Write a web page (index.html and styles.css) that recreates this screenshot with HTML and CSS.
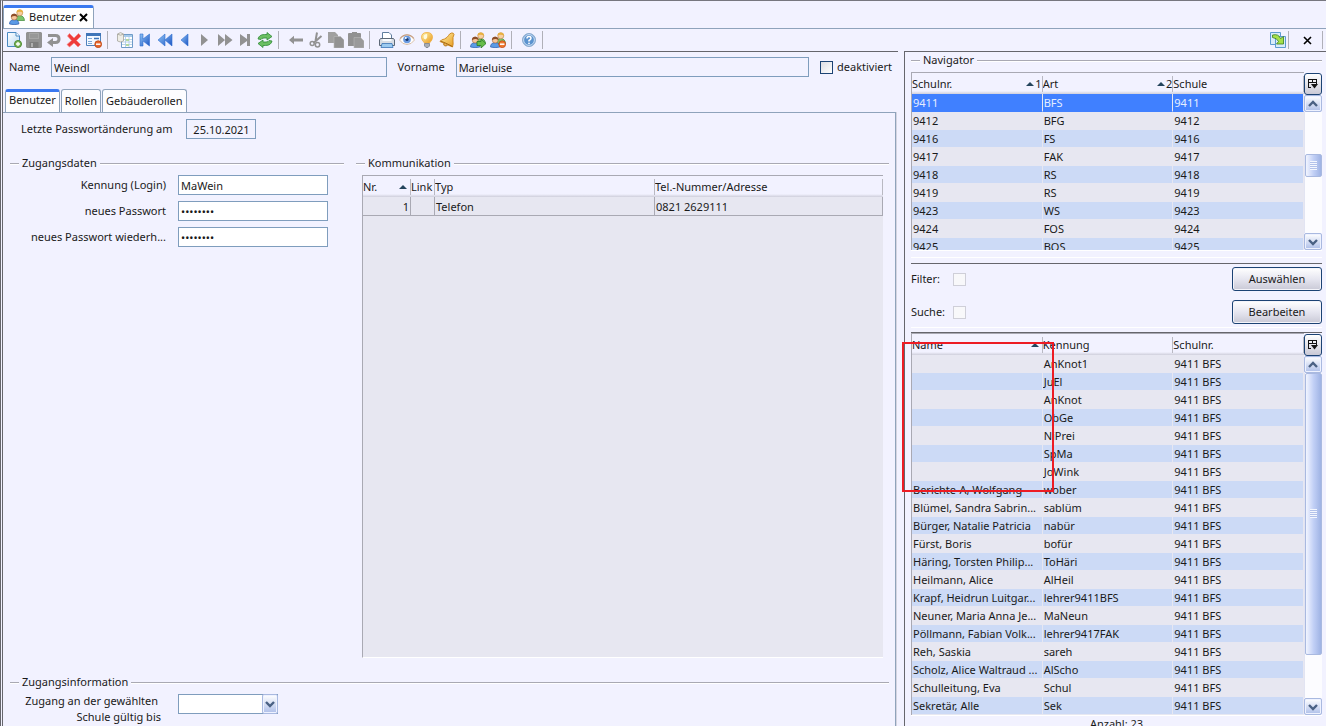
FILE: index.html
```html
<!DOCTYPE html>

<html lang="de">
<head>
<meta charset="UTF-8">
<meta name="viewport" content="width=device-width, initial-scale=1.0">
<title>Benutzer</title>

<link rel="stylesheet" href="styles.css">

</head>

<body>

<!-- ICONS -->

<svg class="defs" aria-hidden="true">
    <defs>
        <linearGradient id="blue" x1="0" y1="0" x2="1" y2="1">
            <stop offset="0" stop-color="#8fc4f5"/>
            <stop offset="1" stop-color="#1d55c4"/>
        </linearGradient>
        <linearGradient id="gold" x1="0" y1="0" x2="1" y2="1">
            <stop offset="0" stop-color="#fff3a8"/>
            <stop offset="1" stop-color="#e89a20"/>
        </linearGradient>
        <linearGradient id="page" x1="0" y1="0" x2="1" y2="1">
            <stop offset="0" stop-color="#ffffff"/>
            <stop offset="1" stop-color="#b9d9f3"/>
        </linearGradient>
    </defs>
    <symbol id="users" viewBox="0 0 16 16">
        <path d="M6.500 9.500Q7 6.500 10.500 6.500Q15 6.500 15.500 11.500H8z" fill="#7cc46a" stroke="#3f8a3a" stroke-width=".7"/>
        <circle cx="10.800" cy="3.800" r="3" fill="#f8cfa0" stroke="#b98546" stroke-width=".6"/>
        <path d="M7.600 3.800Q7.400 .5 10.800 .5Q14.200 .5 14 4Q12.500 2.600 10.500 2.800Q8.500 2.900 7.600 3.800z" fill="#e8b040"/>
        <path d="M.5 15Q.5 10.700 5.200 10.700Q9.900 10.700 9.900 15Q5 16.400 .5 15z" fill="#5b9be6" stroke="#2a5cac" stroke-width=".7"/>
        <circle cx="5.200" cy="8" r="3" fill="#f6c59a" stroke="#a96a3b" stroke-width=".6"/>
        <path d="M2 8.200Q1.700 4.700 5.200 4.700Q8.700 4.700 8.400 8.200Q7 6.700 5 6.900Q3 7 2 8.200z" fill="#8d4f2a"/>
    </symbol>
    <symbol id="menu" viewBox="0 0 12 12">
        <path d="M1.500 1.500H9.500M1.500 4.500H9.500M1.500 1V9.500M5.500 1V5M9.500 1V6M1 9.500H4" fill="none" stroke="#111"/>
        <path d="M4 6H11L7.500 10.500z" fill="#111"/>
    </symbol>
    <symbol id="up" viewBox="0 0 10 8">
        <path d="M1 6L5 2L9 6" fill="none" stroke="#4a6184" stroke-width="2.400"/>
    </symbol>
    <symbol id="down" viewBox="0 0 10 8">
        <path d="M1 2L5 6L9 2" fill="none" stroke="#4a6184" stroke-width="2.400"/>
    </symbol>
    <symbol id="sort" viewBox="0 0 8 4">
        <path d="M4 0L8 4H0z" fill="#24445c"/>
    </symbol>
</svg>

<div class="window">

<!-- WINDOW TAB -->

<header class="windowTabs">
    <div class="windowTab">
        <svg class="icon"><use href="#users"/></svg>
        <span>Benutzer</span>
        <button class="close" aria-label="Tab schließen">
            <svg width="9" height="9" viewBox="0 0 9 9"><path d="M1 1L8 8M8 1L1 8" stroke="#000" stroke-width="2"/></svg>
        </button>
    </div>
</header>

<!-- TOOLBAR -->

<nav class="toolbar">
    <button aria-label="Neu">
        <svg class="icon" viewBox="0 0 16 16"><path d="M1.500 .5H10L13.500 4V14.500H1.500z" fill="url(#page)" stroke="#4a8ac2"/><path d="M10 .5V4H13.500" fill="#fff" stroke="#4a8ac2"/><circle cx="12" cy="12" r="3.500" fill="#7fb85c" stroke="#4c8832"/><path d="M12 10V14M10 12H14" stroke="#fff" stroke-width="1.300"/></svg>
    </button>
    <button aria-label="Speichern">
        <svg class="icon" viewBox="0 0 16 16"><path d="M1 0H15L16 1V15L15 16H1L0 15V1z" fill="#929292"/><path d="M3 1H13V7H3z" fill="#a6a6a6"/><path d="M4 3H12M4 5H12" stroke="#8a8a8a"/><path d="M3.500 10H12.500V16H3.500z" fill="#7e7e7e"/><path d="M5 11H7V15H5z" fill="#b0b0b0"/></svg>
    </button>
    <button aria-label="Rückgängig">
        <svg class="icon" viewBox="0 0 16 16"><path d="M2 3.500H9.500Q13 3.500 13 7Q13 10.500 9.500 10.500H6" fill="none" stroke="#929292" stroke-width="3"/><path d="M7 6V15L1 10.500z" fill="#929292"/></svg>
    </button>
    <button aria-label="Löschen">
        <svg class="icon" viewBox="0 0 16 16"><path d="M3.500 1.500L8 6L12.500 1.500L15 4L10.500 8.500L14.500 12.500L12 15L8 11L3.500 15L1 12.500L5.500 8.500L1.500 4z" fill="#ee3b3b" stroke="#f58a86" stroke-width=".7"/></svg>
    </button>
    <button aria-label="Eintrag entfernen">
        <svg class="icon" viewBox="0 0 16 16"><path d="M.5 1.500H14.500V13.500H.5z" fill="#f4f9ff" stroke="#4f82bd"/><path d="M0 1H15V4H0z" fill="#3f75b8"/><path d="M2 6.500H6M2 9.500H6M2 11.500H6" stroke="#7ba7d6"/><path d="M8 6.500H13" stroke="#3f75b8" stroke-width="1.500"/><circle cx="12.200" cy="12.200" r="3.400" fill="#e8662c" stroke="#b84512" stroke-width=".8"/><path d="M10 12.200H14.400" stroke="#fff" stroke-width="1.500"/></svg>
    </button>
    <span class="sep"></span>
    <button aria-label="Datenliste">
        <svg class="icon" viewBox="0 0 16 16"><path d="M4.500 2.500H15.500V15.500H4.500z" fill="#fff" stroke="#6f9bc8"/><path d="M5 3H15V5H5z" fill="#a8cbea"/><path d="M5 7.500H15M5 10H15M5 12.500H15M8.500 5V15M12 5V15" stroke="#a9c9e6" stroke-width=".8"/><path d="M9 7H12V9H9zM9 12H12V14H9z" fill="#b4d8a0"/><path d="M.5 2V9Q3.500 11 6.500 9V2Q3.500 -.8 .5 2z" fill="#eeede6" stroke="#a5a59c" stroke-width=".8"/><path d="M.5 2.200Q3.500 4.200 6.500 2.200" fill="none" stroke="#a5a59c" stroke-width=".8"/></svg>
    </button>
    <button aria-label="Erster">
        <svg class="icon" viewBox="0 0 16 16"><path d="M3 2H6V7L12.500 2V14L6 9V14H3z" fill="url(#blue)" stroke="#2f6fd0" stroke-width=".6"/></svg>
    </button>
    <button aria-label="Zurückblättern">
        <svg class="icon" viewBox="0 0 16 16"><path d="M8 2V14L1 8zM15 2V14L8 8z" fill="url(#blue)" stroke="#2f6fd0" stroke-width=".6"/></svg>
    </button>
    <button aria-label="Vorheriger">
        <svg class="icon" viewBox="0 0 16 16"><path d="M11 2V14L4 8z" fill="url(#blue)" stroke="#2f6fd0" stroke-width=".6"/></svg>
    </button>
    <button aria-label="Nächster">
        <svg class="icon" viewBox="0 0 16 16"><path d="M4 2V14L11 8z" fill="#929292"/></svg>
    </button>
    <button aria-label="Vorblättern">
        <svg class="icon" viewBox="0 0 16 16"><path d="M1 2V14L8 8zM8 2V14L15.500 8z" fill="#929292"/></svg>
    </button>
    <button aria-label="Letzter">
        <svg class="icon" viewBox="0 0 16 16"><path d="M3 2L10 7V2H13V14H10V9L3 14z" fill="#929292"/></svg>
    </button>
    <button aria-label="Aktualisieren">
        <svg class="icon" viewBox="0 0 16 16"><path d="M1 7Q2 2.500 7.500 2.500H10V.5L15 4.500L10 8V6H7Q4.500 6 4 7.500z" fill="#6bbf62" stroke="#2f8a37" stroke-width=".8"/><path d="M15 9Q14 13.500 8.500 13.500H6V15.500L1 11.500L6 8V10H9Q11.500 10 12 8.500z" fill="#6bbf62" stroke="#2f8a37" stroke-width=".8"/></svg>
    </button>
    <span class="sep"></span>
    <button aria-label="Zurück">
        <svg class="icon" viewBox="0 0 16 16"><path d="M1 8L6 3.800V6.500H15V9.500H6V12.200z" fill="#929292"/></svg>
    </button>
    <button aria-label="Ausschneiden">
        <svg class="icon" viewBox="0 0 16 16"><path d="M9 .5L7.500 9M13.500 4L5.500 11" stroke="#929292" stroke-width="2"/><circle cx="4.200" cy="11.500" r="2" fill="none" stroke="#929292" stroke-width="1.500"/><circle cx="9.500" cy="12.800" r="2.200" fill="none" stroke="#929292" stroke-width="1.500"/></svg>
    </button>
    <button aria-label="Kopieren">
        <svg class="icon" viewBox="0 0 16 16"><path d="M0 0H7L10 3V11H0z" fill="#a0a0a0"/><path d="M6 4.500H12.500L16 8V16H6z" fill="#929292" stroke="#b8b8b8" stroke-width=".6"/></svg>
    </button>
    <button aria-label="Einfügen">
        <svg class="icon" viewBox="0 0 16 16"><path d="M0 2Q0 1 1 1H4V0H9V1H12Q13 1 13 2V14H0z" fill="#929292"/><path d="M6 5.500H12.500L16 9V16H6z" fill="#9a9a9a" stroke="#b8b8b8" stroke-width=".6"/></svg>
    </button>
    <span class="sep"></span>
    <button aria-label="Drucken">
        <svg class="icon" viewBox="0 0 16 16"><path d="M3.500 8V.5H10L12.500 3V8" fill="#fff" stroke="#5f7d9e"/><path d="M1.500 6.500H14.500L15.500 8V13.500H.5V8z" fill="#d8dde4" stroke="#5c6876"/><path d="M3.500 7H12.500V9H3.500z" fill="#f8fbff"/><path d="M3 11.500H13L14 15.500H2z" fill="#9ccaf0" stroke="#3b75b5" stroke-width=".8"/></svg>
    </button>
    <button aria-label="Vorschau">
        <svg class="icon" viewBox="0 0 16 16"><path d="M.5 8Q3.500 3 8 3Q12.500 3 15.500 8Q12.500 12.500 8 12.500Q3.500 12.500 .5 8z" fill="#fff" stroke="#d9bfa8"/><path d="M1 6.500Q4 2.700 8 2.700Q12 2.700 15 6.500" fill="none" stroke="#c49a7c" stroke-width="1.100"/><circle cx="8" cy="7.500" r="3.800" fill="#6b9be0"/><circle cx="8" cy="7.500" r="1.600" fill="#1b3a70"/><circle cx="6.800" cy="6" r="1" fill="#fff"/></svg>
    </button>
    <button aria-label="Hinweis">
        <svg class="icon" viewBox="0 0 16 16"><path d="M8 .5Q13.500 .5 13.500 5.500Q13.500 8 10.500 11H5.500Q2.500 8 2.500 5.500Q2.500 .5 8 .5z" fill="url(#gold)" stroke="#f0ac3c" stroke-width=".8"/><path d="M8 2Q4.500 2 4.500 5Q4.500 7 6.500 7.500Q9 6 8 2z" fill="#fffbe0"/><path d="M5.500 11.500H10.500V14L9 15.500H7L5.500 14z" fill="#a8adb5" stroke="#70757e" stroke-width=".7"/></svg>
    </button>
    <button aria-label="Erinnerung">
        <svg class="icon" viewBox="0 0 16 16"><path d="M12.500 1Q14.500 .5 15 2.500Q13.500 5 14 9Q14.500 12 13.500 15L1 9.500Q2 7.500 5.500 7Q8.500 5.500 9.500 3.500Q10.500 1.500 12.500 1z" fill="url(#gold)" stroke="#c98218" stroke-width=".9"/><path d="M1.500 9Q6 10.500 13.500 14.500" fill="none" stroke="#a96c14"/><path d="M4.500 11.500Q4.500 15 8.500 13.500" fill="#e0a030" stroke="#a96c14" stroke-width=".8"/></svg>
    </button>
    <span class="sep"></span>
    <button aria-label="Benutzer übernehmen">
        <svg class="icon" viewBox="0 0 16 16"><use href="#users" width="16" height="16"/><path d="M7 9.500H11V7L16 11.500L11 16V13.500H7z" fill="#67bd4a" stroke="#2c7a26" stroke-width=".8"/></svg>
    </button>
    <button aria-label="Benutzer entfernen">
        <svg class="icon" viewBox="0 0 16 16"><use href="#users" width="16" height="16"/><circle cx="12.200" cy="12.200" r="3.400" fill="#ee7a32" stroke="#c24a15" stroke-width=".8"/><path d="M10 12.200H14.400" stroke="#fff" stroke-width="1.500"/></svg>
    </button>
    <span class="sep"></span>
    <button aria-label="Hilfe">
        <svg class="icon" viewBox="0 0 16 16"><circle cx="8" cy="8" r="6.500" fill="#5b93cf" stroke="#8faed0"/><circle cx="8" cy="8" r="5.400" fill="none" stroke="#dce9f6" stroke-width=".9"/><path d="M6 6.500Q6 4.500 8 4.500Q10 4.500 10 6.200Q10 7.300 8 8.500V9.500" fill="none" stroke="#fff" stroke-width="1.500"/><circle cx="8" cy="11.300" r=".9" fill="#fff"/></svg>
    </button>
    <span class="sep"></span>

    <div class="toolbarRight">
        <button aria-label="Fenster lösen">
            <svg class="icon" viewBox="0 0 16 16"><path d="M.5 .5H10.500V12.500H.5z" fill="#d9ecfa" stroke="#5d9bd0"/><path d="M5.500 4.500H15.500V15.500H5.500z" fill="#d9ecfa" stroke="#5d9bd0"/><path d="M2.500 3Q8.500 1.500 10.500 6.500L13.500 4.500V12H6.500L8.500 9.500Q7 6 2.500 5.500z" fill="#a5e04a" stroke="#397f1b" stroke-width=".8"/></svg>
        </button>
        <span class="sep"></span>
        <button class="wide" aria-label="Schließen">
            <svg width="9" height="9" viewBox="0 0 9 9"><path d="M1 1L8 8M8 1L1 8" stroke="#000" stroke-width="1.600"/></svg>
        </button>
        <span class="sep"></span>
    </div>
</nav>

<main class="content">

<!-- USER FORM -->

<section class="form">

    <div class="person">
        <label for="name">Name</label>
        <input type="text" id="name" class="nameField" value="Weindl" readonly>
        <label for="vorname">Vorname</label>
        <input type="text" id="vorname" class="vornameField" value="Marieluise" readonly>
        <label class="check"><input type="checkbox"> deaktiviert</label>
    </div>

    <div class="tabs" role="tablist">
        <button class="tab active" role="tab" aria-selected="true">Benutzer</button>
        <button class="tab" role="tab" aria-selected="false">Rollen</button>
        <button class="tab" role="tab" aria-selected="false">Gebäuderollen</button>
    </div>

    <div class="panel">

        <div class="changed">
            <label for="datum">Letzte Passwortänderung am</label>
            <input type="text" id="datum" value="25.10.2021" readonly>
        </div>

        <div class="columns">

            <fieldset class="access">
                <legend>Zugangsdaten</legend>
                <div class="row">
                    <label for="kennung">Kennung (Login)</label>
                    <input type="text" id="kennung" value="MaWein">
                </div>
                <div class="row">
                    <label for="pass">neues Passwort</label>
                    <input type="password" id="pass" value="passwort">
                </div>
                <div class="row">
                    <label for="pass2">neues Passwort wiederh...</label>
                    <input type="password" id="pass2" value="passwort">
                </div>
            </fieldset>

            <fieldset class="contact">
                <legend>Kommunikation</legend>
                <div class="contactList">
                    <table>
                        <colgroup><col class="colNr"><col class="colLink"><col class="colTyp"><col></colgroup>
                        <thead>
                            <tr>
                                <th><span class="head">Nr. <svg class="sort"><use href="#sort"/></svg></span></th>
                                <th>Link</th>
                                <th>Typ</th>
                                <th>Tel.-Nummer/Adresse</th>
                            </tr>
                        </thead>
                        <tbody>
                            <tr><td class="num">1</td><td></td><td>Telefon</td><td>0821 2629111</td></tr>
                        </tbody>
                    </table>
                </div>
            </fieldset>

        </div>

        <fieldset class="info">
            <legend>Zugangsinformation</legend>
            <div class="row">
                <label for="gueltig"><span class="first">Zugang an der gewählten</span> Schule gültig bis</label>
                <div class="combo">
                    <select id="gueltig"><option></option></select>
                    <span class="comboArrow"><svg width="10" height="8"><use href="#down"/></svg></span>
                </div>
            </div>
        </fieldset>

    </div>

</section>

<!-- NAVIGATOR -->

<aside class="navigator">

    <fieldset class="schools">
        <legend>Navigator</legend>
        <div class="list schoolList">
            <div class="tableBox">
                <table>
                    <thead>
                        <tr>
                            <th><span class="head">Schulnr. <span class="order"><svg class="sort"><use href="#sort"/></svg>1</span></span></th>
                            <th><span class="head">Art <span class="order"><svg class="sort"><use href="#sort"/></svg>2</span></span></th>
                            <th>Schule</th>
                        </tr>
                    </thead>
                    <tbody>
                        <tr class="selected"><td>9411</td><td>BFS</td><td>9411</td></tr>
                        <tr><td>9412</td><td>BFG</td><td>9412</td></tr>
                        <tr><td>9416</td><td>FS</td><td>9416</td></tr>
                        <tr><td>9417</td><td>FAK</td><td>9417</td></tr>
                        <tr><td>9418</td><td>RS</td><td>9418</td></tr>
                        <tr><td>9419</td><td>RS</td><td>9419</td></tr>
                        <tr><td>9423</td><td>WS</td><td>9423</td></tr>
                        <tr><td>9424</td><td>FOS</td><td>9424</td></tr>
                        <tr><td>9425</td><td>BOS</td><td>9425</td></tr>
                    </tbody>
                </table>
            </div>
            <div class="side">
                <button class="columnMenu" aria-label="Spalten"><svg width="12" height="12"><use href="#menu"/></svg></button>
                <button class="arrow" aria-label="Nach oben"><svg width="10" height="8"><use href="#up"/></svg></button>
                <div class="track schoolTrack"><div class="thumb"><i></i></div></div>
                <button class="arrow" aria-label="Nach unten"><svg width="10" height="8"><use href="#down"/></svg></button>
            </div>
        </div>
    </fieldset>

    <div class="search">
        <div class="searchRow">
            <label for="filter">Filter:</label>
            <input type="checkbox" id="filter" disabled>
            <button class="btn">Auswählen</button>
        </div>
        <div class="searchRow">
            <label for="suche">Suche:</label>
            <input type="checkbox" id="suche" disabled>
            <button class="btn">Bearbeiten</button>
        </div>
    </div>

    <div class="list userList">
        <div class="tableBox">
            <table>
                <thead>
                    <tr>
                        <th><span class="head">Name <svg class="sort"><use href="#sort"/></svg></span></th>
                        <th>Kennung</th>
                        <th>Schulnr.</th>
                    </tr>
                </thead>
                <tbody>
                    <tr><td></td><td>AnKnot1</td><td>9411 BFS</td></tr>
                    <tr><td></td><td>JuEl</td><td>9411 BFS</td></tr>
                    <tr><td></td><td>AnKnot</td><td>9411 BFS</td></tr>
                    <tr><td></td><td>ObGe</td><td>9411 BFS</td></tr>
                    <tr><td></td><td>NiPrei</td><td>9411 BFS</td></tr>
                    <tr><td></td><td>SpMa</td><td>9411 BFS</td></tr>
                    <tr><td></td><td>JoWink</td><td>9411 BFS</td></tr>
                    <tr><td>Berichte-A, Wolfgang</td><td>wober</td><td>9411 BFS</td></tr>
                    <tr><td>Blümel, Sandra Sabrin...</td><td>sablüm</td><td>9411 BFS</td></tr>
                    <tr><td>Bürger, Natalie Patricia</td><td>nabür</td><td>9411 BFS</td></tr>
                    <tr><td>Fürst, Boris</td><td>bofür</td><td>9411 BFS</td></tr>
                    <tr><td>Häring, Torsten Philip...</td><td>ToHäri</td><td>9411 BFS</td></tr>
                    <tr><td>Heilmann, Alice</td><td>AlHeil</td><td>9411 BFS</td></tr>
                    <tr><td>Krapf, Heidrun Luitgar...</td><td>lehrer9411BFS</td><td>9411 BFS</td></tr>
                    <tr><td>Neuner, Maria Anna Je...</td><td>MaNeun</td><td>9411 BFS</td></tr>
                    <tr><td>Pöllmann, Fabian Volk...</td><td>lehrer9417FAK</td><td>9411 BFS</td></tr>
                    <tr><td>Reh, Saskia</td><td>sareh</td><td>9411 BFS</td></tr>
                    <tr><td>Scholz, Alice Waltraud ...</td><td>AlScho</td><td>9411 BFS</td></tr>
                    <tr><td>Schulleitung, Eva</td><td>Schul</td><td>9411 BFS</td></tr>
                    <tr><td>Sekretär, Alle</td><td>Sek</td><td>9411 BFS</td></tr>
                </tbody>
            </table>
        </div>
        <div class="side">
            <button class="columnMenu" aria-label="Spalten"><svg width="12" height="12"><use href="#menu"/></svg></button>
            <button class="arrow" aria-label="Nach oben"><svg width="10" height="8"><use href="#up"/></svg></button>
            <div class="track userTrack"><div class="thumb"><i></i></div></div>
            <button class="arrow" aria-label="Nach unten"><svg width="10" height="8"><use href="#down"/></svg></button>
        </div>
        <div class="marker"></div>
    </div>

    <div class="count">Anzahl: 23</div>

</aside>

</main>

</div>

</body>
</html>
```

FILE: styles.css
```css
*{
    margin:0;
    padding:0;
    box-sizing:border-box;
}

body{
    overflow:hidden;
    background:#f2f2ff;
    color:#1a1a1a;
    font:11px/16px "Noto Sans",sans-serif;
}

input,
button,
select{
    font:inherit;
    color:inherit;
}

button{
    border:none;
    background:none;
}

svg{
    display:block;
    flex:none;
}

.defs{
    position:absolute;
    width:0;
    height:0;
}

.icon{
    width:16px;
    height:16px;
}

.window{
    display:flex;
    flex-direction:column;
    height:100vh;
    border-top:1px solid #77777f;
    border-left:3px double #66666c;
}

/* WINDOW TAB */

.windowTabs{
    display:flex;
    align-items:flex-end;
    height:28px;
    border-bottom:1px solid #8fa3bb;
}

.windowTab{
    display:flex;
    align-items:center;
    gap:4px;
    height:23px;
    padding:0 5px 2px;
    background:#fff;
    border:1px solid #8fa3bb;
    border-top:3px solid #3a78f0;
    border-bottom:none;
    border-radius:3px 3px 0 0;
}

.windowTab span{
    margin-right:-1px;
}

/* TOOLBAR */

.toolbar{
    display:flex;
    align-items:center;
    height:22px;
    padding-left:1px;
}

.toolbar button{
    display:flex;
    align-items:center;
    justify-content:center;
    width:20px;
    height:20px;
}

.toolbar .wide{
    width:24px;
}

.sep{
    width:1px;
    height:18px;
    margin:0 7px 0 3px;
    background:#b0b0b8;
}

.toolbarRight{
    display:flex;
    align-items:center;
    margin-left:auto;
}

.toolbarRight .sep{
    margin:0 4px 0 0;
}

.toolbarRight .sep:last-child{
    margin-right:3px;
}

.toolbarRight .wide{
    width:29px;
}

/* LAYOUT */

.content{
    display:flex;
    gap:6px;
    flex:1;
    min-height:0;
}

.form{
    display:flex;
    flex-direction:column;
    flex:1;
    min-width:0;
    border-top:1px solid #66666c;
}

.navigator{
    flex:0 0 422px;
    min-width:0;
    padding:0 4px 0 6px;
    border-top:1px solid #66666c;
    border-left:1px solid #66666c;
}

/* FIELDS */

input[type=text],
input[type=password],
select{
    height:20px;
    min-width:0;
    padding:0 2px;
    border:1px solid #7f9dbd;
    background:#fff;
    outline:none;
}

input[readonly]{
    background:#f2f2ff!important;
}

input[type=checkbox]{
    appearance:none;
    width:13px;
    height:13px;
    border:1px solid #1c4374;
    background:linear-gradient(135deg,#dcdce2,#fff);
}

input[type=checkbox]:disabled{
    border-color:#cfcfd8;
    background:#f8f8fa;
}

fieldset{
    min-width:0;
    border:none;
    border-top:1px solid #a9a9b3;
    box-shadow:inset 0 1px #fff;
}

legend{
    margin-left:9px;
    padding:0 3px;
    background:#f2f2ff;
}

.person{
    display:flex;
    align-items:center;
    gap:11px;
    padding:5px 6px 0;
}

.nameField{
    flex:333 1 0;
}

.vornameField{
    flex:351 1 0;
}

.check{
    display:flex;
    align-items:center;
    gap:4px;
}

/* TABS */

.tabs{
    display:flex;
    align-items:flex-end;
    gap:1px;
    padding:12px 2px 0;
}

.tab{
    height:23px;
    padding:0 3px;
    border:1px solid #8fa3bb;
    border-bottom:none;
    border-radius:3px 3px 0 0;
    background:#fdfdff;
}

.tab.active{
    padding-bottom:5px;
    border-top:3px solid #3a78f0;
}

.panel{
    display:flex;
    flex-direction:column;
    flex:1;
    min-height:0;
    margin-right:2px;
    padding:6px 6px 0 7px;
    border:1px solid #8fa3bb;
    border-left:none;
    border-bottom:none;
    box-shadow:1px 0 #d4d4e0;
}

.changed{
    display:flex;
    align-items:center;
    gap:14px;
    padding:0 0 16px 11px;
}

.changed input{
    width:70px;
    text-align:center;
}

.columns{
    display:flex;
    gap:12px;
    flex:1;
    min-height:0;
}

.access{
    flex:334 1 0;
}

.contact{
    display:flex;
    flex:533 1 0;
}

.row{
    display:flex;
    align-items:center;
    gap:12px;
}

.row label{
    flex:0 0 156px;
    text-align:right;
}

.row input{
    width:150px;
}

.access .row{
    padding:4px 0 2px;
}

.contactList{
    flex:1;
    margin:4px 6px 16px;
    border-top:1px solid #a9a9b3;
    border-left:1px solid #a9a9b3;
    border-bottom:1px solid #fff;
    background:#e7e7f1;
}

.info{
    height:52px;
}

.info .row label{
    flex-basis:151px;
    padding-top:3px;
}

.info .row{
    gap:17px;
    align-items:flex-start;
}

.first{
    display:block;
    padding-right:3px;
}

.combo{
    display:flex;
    margin-top:4px;
    position:relative;
}

.combo select{
    appearance:none;
    width:100px;
}

.comboArrow,
.arrow{
    display:flex;
    align-items:center;
    justify-content:center;
    border:1px solid #a9b9e0;
    border-radius:2px;
    background:linear-gradient(#fff,#aebfe9);
    box-shadow:inset 0 0 0 1px #eef2ff;
}

.comboArrow{
    position:absolute;
    top:0;
    right:0;
    width:16px;
    height:20px;
    pointer-events:none;
}

/* TABLES */

table{
    width:100%;
    table-layout:fixed;
    border-collapse:separate;
    border-spacing:0;
}

th,
td{
    overflow:hidden;
    white-space:nowrap;
    text-align:left;
    font-weight:normal;
}

th{
    height:21px;
    background:linear-gradient(#b9b9c2,#b9b9c2) right 3px/1px 16px no-repeat,linear-gradient(#f2f2ff 18px,#cfcfdb 21px);
}

td{
    height:18px;
    padding:0 0 0 1px;
    line-height:17px;
    border-right:1px solid #e7e7f1;
    border-bottom:1px solid #e7e7f1;
    background:#e7e7f1;
}

.head,
.order{
    display:flex;
    align-items:center;
    justify-content:space-between;
}

.head{
    padding-right:4px;
}

.head:has(.order){
    padding-right:1px;
}

.order{
    gap:1px;
}

.sort{
    width:8px;
    height:4px;
}

.colNr{
    width:48px;
}

.colLink{
    width:24px;
}

.colTyp{
    width:220px;
}

.contactList td{
    height:19px;
    border-color:#a9a9b3;
}

.contactList .num{
    padding-right:1px;
    text-align:right;
}

.schoolList tr:nth-child(odd) td,
.userList tbody tr:nth-child(even) td{
    background:#ccdaf6;
    background-clip:padding-box;
}

.schoolList .selected td{
    border-bottom-color:#4080ff;
    background:#4080ff!important;
    background-clip:padding-box!important;
    color:#e6eeff;
}

/* LISTS */

.list{
    display:flex;
    position:relative;
}

.tableBox{
    flex:1;
    min-width:0;
    overflow:hidden;
    border-left:1px solid #a9a9b3;
    border-top:1px solid #a9a9b3;
}

.schools{
    border-top-color:#a9a9b3;
}

.schools legend{
    margin-left:9px;
}

.schoolList{
    height:179px;
    margin-top:4px;
    border-bottom:1px solid #fff;
}

.side{
    display:flex;
    flex-direction:column;
    width:18px;
    padding-top:1px;
}

.columnMenu{
    display:flex;
    align-items:center;
    justify-content:center;
    height:22px;
    border:1px solid #1c4374;
    border-radius:3px;
    background:linear-gradient(#fff,#c9c9d6);
}

.arrow{
    height:17px;
    flex:none;
}

.track{
    display:grid;
    flex:1;
    background:#fcfcff;
    border-left:1px solid #e2e4f2;
}

.schoolTrack{
    grid-template-rows:42fr 23px 56fr;
}

.userTrack{
    grid-template-rows:0 281fr 43fr;
}

.thumb{
    display:flex;
    align-items:center;
    justify-content:center;
    grid-row:2;
    border:1px solid #a9b9e0;
    border-radius:2px;
    background:linear-gradient(90deg,#f2f5ff,#c2d0f6 50%,#9fb3e4);
}

.thumb i{
    width:7px;
    height:9px;
    background:repeating-linear-gradient(#f4f7ff 0 1px,#b3c2ea 1px 2px);
}

.search{
    margin-top:6px;
    border-top:1px solid #fff;
    border-bottom:1px solid #fff;
    padding-bottom:3px;
}

.search::before{
    content:"";
    display:block;
    height:1px;
    margin:5px 0 3px;
    background:#66666c;
}

.searchRow{
    display:flex;
    align-items:center;
    height:24px;
}

.searchRow + .searchRow{
    margin-top:9px;
}

.searchRow label{
    width:42px;
}

.btn{
    width:90px;
    height:24px;
    margin-left:auto;
    border:1px solid #1c4374;
    border-radius:3px;
    background:linear-gradient(#fff,#e6e6f0 50%,#c9c9d6);
    box-shadow:inset 0 0 0 1px #f4f4fa;
}

.userList{
    margin-top:4px;
    border-top:1px solid #66666c;
    border-bottom:1px solid #fff;
}

/* red frame around the rows without a name */

.marker{
    position:absolute;
    top:9px;
    left:-9px;
    width:152px;
    height:150px;
    border:2px solid #ed1c24;
}

.count{
    text-align:center;
}
```
